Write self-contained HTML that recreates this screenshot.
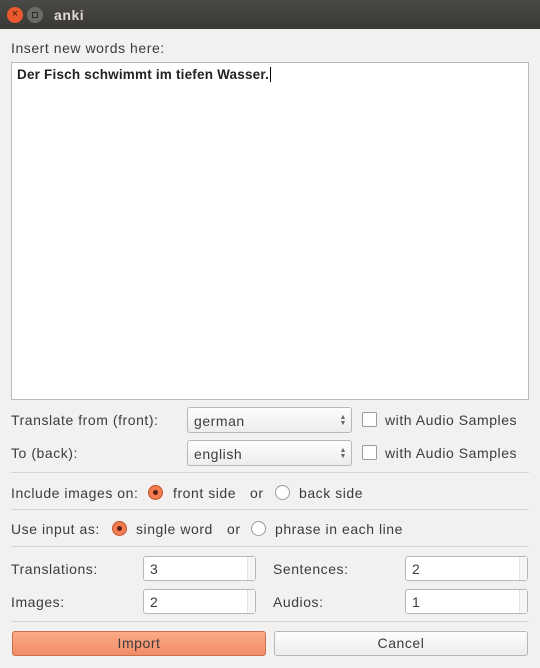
<!DOCTYPE html>
<html><head><style>
*{box-sizing:border-box;margin:0;padding:0}
body{width:540px;height:668px;background:#f2f1f0;font-family:"Liberation Sans",sans-serif;font-size:14px;letter-spacing:0.55px;color:#3c3c3c;position:relative;overflow:hidden}
.a{position:absolute;white-space:nowrap}
.t{line-height:16px}
.title{left:0;top:0;width:540px;height:29px;background:linear-gradient(#4a4945,#3a3935);}
.sep{position:absolute;left:11px;width:518px;height:1px;background:#d6d4d2}
.combo{position:absolute;left:187px;width:165px;height:26px;border:1px solid #b9b7b5;border-radius:3px;background:linear-gradient(#fdfdfd,#ededec);padding:5px 0 0 6px}
.cb{position:absolute;left:362px;width:15px;height:15px;border:1px solid #9c9a98;border-radius:2px;background:#fff}
.spin{position:absolute;width:113px;height:25px;border:1px solid #b9b7b5;border-radius:3px;background:#fff;padding:4px 0 0 6px}
.spin::after{content:"";position:absolute;right:0;top:0;width:7px;height:23px;border-left:1px solid #e4e4e4;background:#f6f6f5}
.radio{position:absolute;width:15px;height:15px;border-radius:50%;border:1px solid #9c9a98;background:#fff}
.radio.on{border-color:#c0512a;background:#f47c51}
.radio.on::after{content:"";position:absolute;left:4px;top:4px;width:5px;height:5px;border-radius:50%;background:#5a2010}
.arr{position:absolute;right:4px;font-size:7px;color:#666;line-height:6px}
</style></head><body>
<div class="a title"></div>
<div class="a" style="left:7px;top:7px;width:16px;height:16px;border-radius:50%;background:#e9592d;color:#3a1a0a;font-size:11px;text-align:center;line-height:15px;letter-spacing:0">×</div>
<div class="a" style="left:27px;top:7px;width:16px;height:16px;border-radius:50%;background:#6b6a66"><div style="margin:5px;width:6px;height:6px;border:1px solid #2a2a28"></div></div>
<div class="a t" style="left:54px;top:7px;color:#dfdbd2;font-weight:bold;font-size:14px">anki</div>
<div class="a t" style="left:11px;top:40px">Insert new words here:</div>
<div class="a" style="left:11px;top:62px;width:518px;height:338px;background:#fff;border:1px solid #bcbab8"></div>
<div class="a t" style="left:17px;top:67px;color:#222;font-weight:bold;font-size:13.5px;letter-spacing:0.2px">Der Fisch schwimmt im tiefen Wasser.<span style="border-left:1px solid #000;margin-left:1px"></span></div>

<div class="a t" style="left:11px;top:412px">Translate from (front):</div>
<div class="combo" style="top:407px">german<span class="arr" style="top:7px">▲<br>▼</span></div>
<div class="cb" style="top:412px"></div>
<div class="a t" style="left:385px;top:412px">with Audio Samples</div>
<div class="a t" style="left:11px;top:445px">To (back):</div>
<div class="combo" style="top:440px">english<span class="arr" style="top:7px">▲<br>▼</span></div>
<div class="cb" style="top:445px"></div>
<div class="a t" style="left:385px;top:445px">with Audio Samples</div>
<div class="sep" style="top:472px"></div>
<div class="a t" style="left:11px;top:485px">Include images on:</div>
<div class="radio on" style="left:148px;top:485px"></div>
<div class="a t" style="left:173px;top:485px">front side</div>
<div class="a t" style="left:250px;top:485px">or</div>
<div class="radio" style="left:275px;top:485px"></div>
<div class="a t" style="left:299px;top:485px">back side</div>
<div class="sep" style="top:509px"></div>
<div class="a t" style="left:11px;top:521px">Use input as:</div>
<div class="radio on" style="left:112px;top:521px"></div>
<div class="a t" style="left:136px;top:521px">single word</div>
<div class="a t" style="left:227px;top:521px">or</div>
<div class="radio" style="left:251px;top:521px"></div>
<div class="a t" style="left:275px;top:521px">phrase in each line</div>
<div class="sep" style="top:546px"></div>
<div class="a t" style="left:11px;top:561px">Translations:</div>
<div class="spin" style="left:143px;top:556px">3</div>
<div class="a t" style="left:273px;top:561px">Sentences:</div>
<div class="spin" style="left:405px;top:556px;width:123px">2</div>
<div class="a t" style="left:11px;top:594px">Images:</div>
<div class="spin" style="left:143px;top:589px">2</div>
<div class="a t" style="left:273px;top:594px">Audios:</div>
<div class="spin" style="left:405px;top:589px;width:123px">1</div>
<div class="sep" style="top:621px"></div>
<div class="a" style="left:12px;top:631px;width:254px;height:25px;border:1px solid #c86e4c;border-radius:3px;background:linear-gradient(#fbaa88,#f28d67);text-align:center;line-height:23px">Import</div>
<div class="a" style="left:274px;top:631px;width:254px;height:25px;border:1px solid #b9b7b5;border-radius:3px;background:linear-gradient(#fdfdfd,#ececeb);text-align:center;line-height:23px">Cancel</div>
</body></html>
